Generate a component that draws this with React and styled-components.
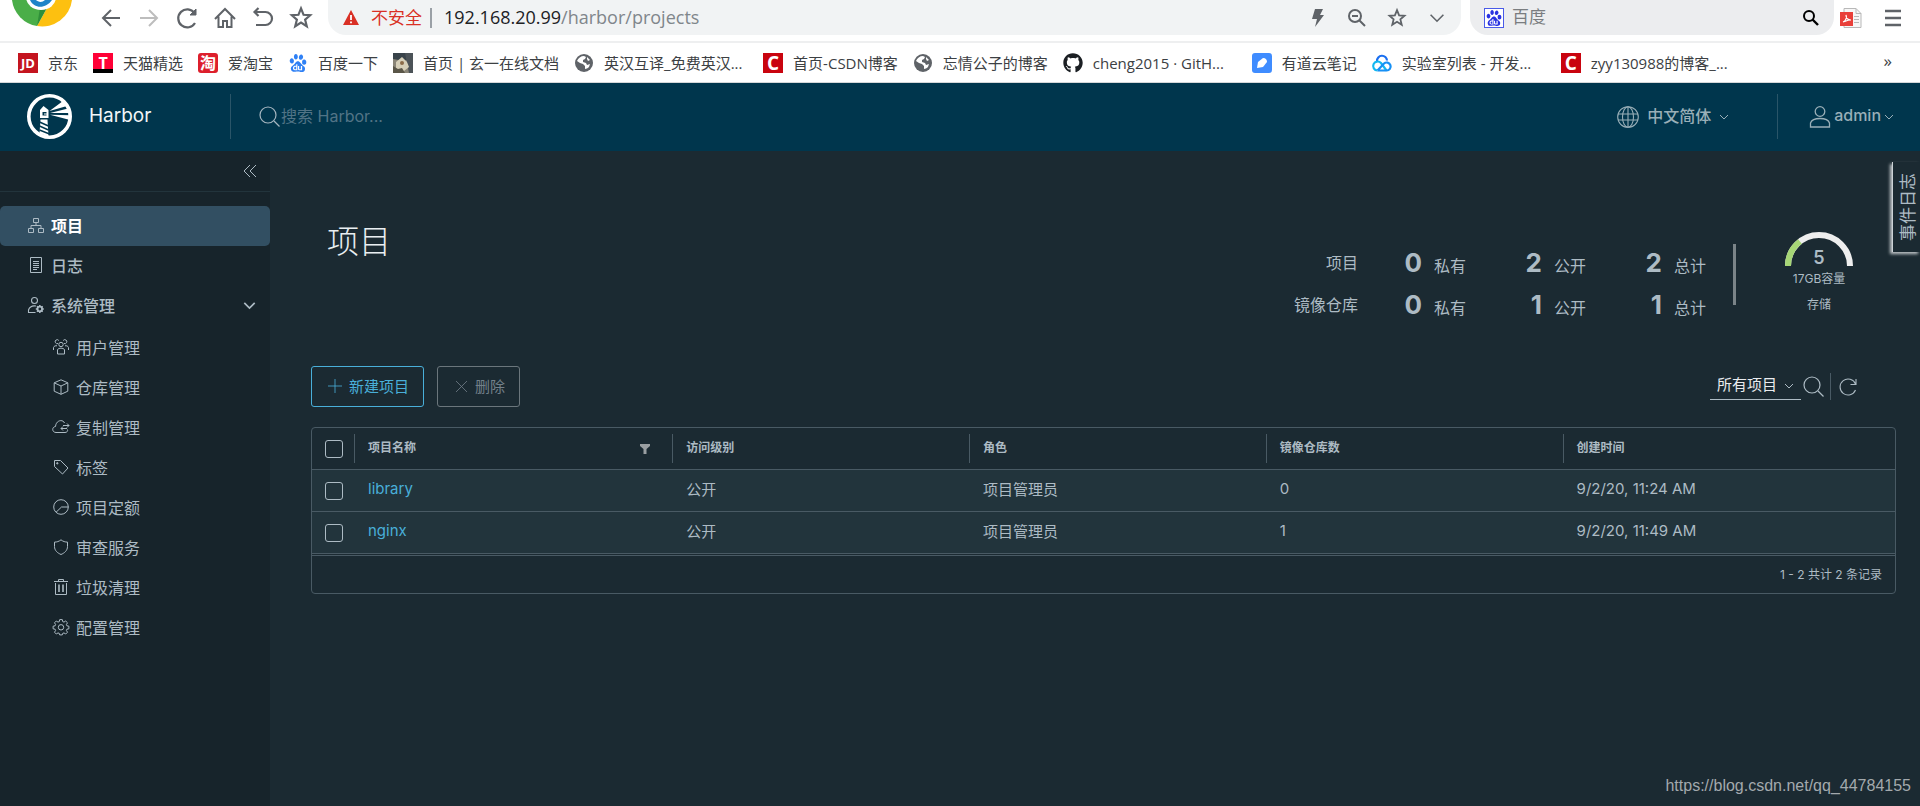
import { useState } from 'react';
import styled, { createGlobalStyle } from 'styled-components';
import { SiBaidu } from 'react-icons/si';
import { FaGithub } from 'react-icons/fa';

const GlobalStyle = createGlobalStyle`
  * {
    box-sizing: border-box;
  }

  body {
    margin: 0;
    background-color: #1b2a32;
    color: #adbbc4;
    font-family: Inter, 'Noto Sans CJK SC', sans-serif;
    font-size: 15px;
  }

  button,
  input,
  select {
    font: inherit;
    color: inherit;
  }

  svg {
    display: block;
    flex-shrink: 0;
    overflow: visible;
  }
`;

const Page = styled.div`
  min-height: 100vh;
  display: flex;
  flex-direction: column;
`;

/* browser bars */

const Browser = styled.div`
  background-color: white;
  color: #3c4043;
  font-family: 'Open Sans', 'Noto Sans CJK SC', sans-serif;
`;

const BrowserBar = styled.div`
  height: 41px;
  display: flex;
  align-items: flex-start;
  overflow: hidden;
`;

const BrowserLogo = styled.div`
  width: 60px;
  height: 30px;
  margin: 0 20px 0 12px;
`;

const BrowserButton = styled.button`
  width: ${(props) => props.$width || '38px'};
  height: 36px;
  padding: 0;
  border: none;
  background: none;
  color: ${(props) => (props.$dim ? '#bdbdbd' : '#5f6368')};
  display: flex;
  align-items: center;
  justify-content: center;
`;

const AddressBar = styled.div`
  flex: 1;
  height: 35px;
  margin-left: 8px;
  padding: 0 4px 0 15px;
  border-radius: 0 0 18px 18px;
  background-color: #f1f3f4;
  display: flex;
  align-items: center;
`;

const Unsafe = styled.span`
  margin-left: 12px;
  padding-right: 8px;
  border-right: 2px solid #9aa0a6;
  font-size: 17px;
  line-height: 20px;
  color: #d93025;
`;

const Url = styled.div`
  flex: 1;
  margin-left: 12px;
  padding-bottom: 2px;
  font-size: 18px;
  color: #80868b;

  b {
    font-weight: 400;
    color: #202124;
  }
`;

const SearchBox = styled.label`
  width: 364px;
  height: 35px;
  margin: 0 2px 0 9px;
  padding: 0 14px;
  border-radius: 0 0 18px 18px;
  background-color: #ecedef;
  display: flex;
  align-items: center;
  gap: 8px;
`;

const BaiduMark = styled.span`
  width: 20px;
  height: 20px;
  border: 1px solid #4a5be8;
  background-color: white;
  color: #2932e1;
  display: flex;
  align-items: center;
  justify-content: center;
`;

const PlainInput = styled.input`
  flex: 1;
  min-width: 0;
  padding: 0 0 2px;
  border: none;
  outline: none;
  background: none;
  font-size: ${(props) => props.$size};

  &::placeholder {
    color: ${(props) => props.$hint};
    opacity: 1;
  }
`;

const Bookmarks = styled.nav`
  height: 42px;
  padding: 0 28px 0 18px;
  border-top: 2px solid #eeeff0;
  border-bottom: 1px solid #d5d7d9;
  display: flex;
  align-items: center;
  gap: 15px;
`;

const Bookmark = styled.a`
  display: flex;
  align-items: center;
  gap: 10px;
  font-size: 15px;
  color: #3c4043;
  text-decoration: none;
  white-space: nowrap;

  span:last-child {
    min-width: ${(props) => (props.$long ? '144px' : 'auto')};
  }
`;

const Favicon = styled.span`
  width: 20px;
  height: 20px;
  border-radius: ${(props) => props.$radius || 0};
  background: ${(props) => props.$bg || 'none'};
  color: ${(props) => props.$color || 'white'};
  font-size: ${(props) => props.$size || '14px'};
  font-weight: 700;
  line-height: 20px;
  display: flex;
  align-items: center;
  justify-content: center;
`;

const More = styled.button`
  margin-left: auto;
  padding: 0 0 4px;
  border: none;
  background: none;
  font-size: 17px;
`;

/* harbor */

const Header = styled.header`
  height: 68px;
  padding-bottom: 1px;
  background-color: #00364d;
  display: flex;
  align-items: center;
`;

const Brand = styled.a`
  width: 231px;
  height: 45px;
  padding-left: 27px;
  border-right: 1px solid #2a5568;
  display: flex;
  align-items: center;
  gap: 17px;
  font-size: 19px;
  color: #f2f6f8;
  text-decoration: none;

  span {
    padding-bottom: 2px;
  }
`;

const HeaderSearch = styled.label`
  flex: 1;
  padding-left: 28px;
  display: flex;
  align-items: center;
  color: #a5b6c0;
`;

const HeaderButton = styled.button`
  height: 45px;
  padding: ${(props) => props.$pad};
  border: none;
  border-left: ${(props) => (props.$divided ? '1px solid #2a5568' : 'none')};
  background: none;
  color: #99afb8;
  font-size: 16px;
  font-weight: 500;
  display: flex;
  align-items: center;
  gap: ${(props) => props.$gap};

  span {
    padding-bottom: 3px;
  }
`;

const Body = styled.div`
  flex: 1;
  display: flex;
  position: relative;
`;

const Sidebar = styled.nav`
  width: 270px;
  flex-shrink: 0;
  background-color: #17242b;
`;

const Collapse = styled.button`
  width: 100%;
  height: 41px;
  margin-bottom: 14px;
  padding: 0 12px;
  border: none;
  border-bottom: 1px solid #22343c;
  background: none;
  display: flex;
  align-items: center;
  justify-content: flex-end;
`;

const NavItem = styled.a`
  height: 40px;
  padding: 0 14px 2px 28px;
  border-radius: 5px;
  background-color: ${(props) => (props.$active ? '#324f62' : 'transparent')};
  color: ${(props) => (props.$active ? 'white' : '#adbbc4')};
  font-size: 16px;
  font-weight: ${(props) => (props.$active ? 700 : 500)};
  text-decoration: none;
  display: flex;
  align-items: center;
  gap: 7px;

  > svg:first-child {
    color: #adbbc4;
  }

  > svg:nth-of-type(2) {
    margin-left: auto;
  }
`;

const SubList = styled.div`
  padding-top: 2px;
`;

const SubItem = styled(NavItem)`
  padding-left: 53px;
  font-weight: 400;
`;

const Main = styled.main`
  flex: 1;
  min-width: 0;
  padding: 0 24px 24px 41px;
`;

const Summary = styled.section`
  height: 215px;
  padding: 70px 43px 0 16px;
  display: flex;
  justify-content: space-between;
`;

const Title = styled.h1`
  margin: 0;
  font-size: 32px;
  font-weight: 300;
  line-height: 42px;
  color: #e9eef1;
`;

const Stats = styled.div`
  display: flex;
  align-items: flex-start;
`;

const StatGrid = styled.dl`
  margin: 0;
  padding: 21px 27px 0 0;
  display: grid;
  grid-template-columns: auto 108px 120px 120px;
  grid-auto-rows: 42px;
`;

const StatLabel = styled.dt`
  text-align: right;
  font-size: 16px;
  line-height: 42px;
`;

const Stat = styled.dd`
  margin: 0;
  display: flex;
  align-items: baseline;
  justify-content: flex-end;
  gap: 12px;
  font-size: 16px;
  line-height: 42px;

  b {
    font-size: 26px;
    font-weight: 700;
  }
`;

const StatBar = styled.div`
  width: 3px;
  height: 61px;
  margin: 23px 49px 0 0;
  background-color: #7b8488;
`;

const Gauge = styled.div`
  margin-top: 11px;
  font-size: 12px;
  line-height: 26px;
  text-align: center;
`;

const Toolbar = styled.div`
  padding-right: 39px;
  display: flex;
  align-items: center;
  gap: 13px;
  height: 41px;
`;

const ActionButton = styled.button`
  height: 41px;
  padding: 0 14px 2px 15px;
  border: 1px solid ${(props) => (props.disabled ? '#6b767c' : '#49afd9')};
  border-radius: 3px;
  background: none;
  color: ${(props) => (props.disabled ? '#73808a' : '#49afd9')};
  font-size: 15px;
  display: flex;
  align-items: center;
  gap: 6px;

  svg {
    opacity: 0.8;
  }
`;

const Filters = styled.div`
  margin-left: auto;
  display: flex;
  align-items: center;
`;

const SelectWrap = styled.label`
  position: relative;

  svg {
    position: absolute;
    right: 7px;
    top: 8px;
    pointer-events: none;
  }
`;

const Select = styled.select`
  width: 91px;
  height: 27px;
  padding: 0 0 3px 7px;
  appearance: none;
  border: none;
  border-bottom: 1px solid #adbbc4;
  border-radius: 0;
  background: none;
  color: #e9ecef;
  font-size: 15px;
`;

const IconButton = styled.button`
  height: 27px;
  padding: ${(props) => (props.$divided ? '0 0 0 8px' : '0 5px 0 2px')};
  border: none;
  border-left: ${(props) => (props.$divided ? '1px solid #495a64' : 'none')};
  background: none;
  display: flex;
  align-items: center;
`;

const GridPanel = styled.div`
  margin-top: 20px;
  border: 1px solid #495a64;
  border-radius: 4px;
`;

const Table = styled.table`
  width: 100%;
  table-layout: fixed;
  border-collapse: separate;
  border-spacing: 0;
`;

const Col = styled.col`
  width: ${(props) => props.$width};
`;

const Th = styled.th`
  height: 42px;
  padding: 0;
  border-bottom: 1px solid #495a64;
  font-size: 12px;
  font-weight: 600;
  text-align: left;
`;

const ThInner = styled.div`
  height: 29px;
  padding: 0 22px 4px 13px;
  border-left: 1px solid #495a64;
  display: flex;
  align-items: center;
  justify-content: space-between;

  svg {
    margin-top: 4px;
  }
`;

const CheckCell = styled.td`
  height: 42px;
  padding: 0 0 0 13px;
  border-bottom: 1px solid #495a64;
`;

const Td = styled.td`
  height: 42px;
  padding: 0 0 4px 14px;
  border-bottom: 1px solid #495a64;

  a {
    color: #49afd9;
    text-decoration: none;
  }
`;

const Row = styled.tr`
  background-color: #22343c;
`;

const Checkbox = styled.input`
  display: block;
  width: 18px;
  height: 18px;
  margin: 0;
  appearance: none;
  border: 1px solid #adbbc4;
  border-radius: 3px;

  &:checked {
    background-color: #49afd9;
  }
`;

const GridFooter = styled.div`
  height: 38px;
  margin-top: 1px;
  padding: 0 13px 2px;
  border-top: 1px solid #495a64;
  display: flex;
  align-items: center;
  justify-content: flex-end;
  font-size: 12px;
`;

const EventTab = styled.button`
  position: absolute;
  top: 11px;
  right: 0;
  width: 28px;
  height: 90px;
  padding: 0;
  border: none;
  border-right: 1px solid #ccd2d6;
  background-color: #1b2a32;
  box-shadow: 2px -2px 3px #c0c5c8;
  writing-mode: vertical-rl;
  text-orientation: sideways;
  transform: rotate(180deg);
  font-size: 17px;
`;

const Watermark = styled.div`
  position: absolute;
  right: 9px;
  bottom: 9px;
  font-family: 'Liberation Sans', Arial, sans-serif;
  font-size: 16px;
  line-height: 22px;
  color: #a3a9ad;
`;

const Icon = ({ size = 16, box = 24, width = 2, children }) => (
  <svg
    width={size}
    height={size}
    viewBox={`0 0 ${box} ${box}`}
    fill="none"
    stroke="currentColor"
    strokeWidth={width}
    aria-hidden="true"
  >
    {children}
  </svg>
);

const Chevron = ({ size = 10, width = 1 }) => (
  <Icon size={size} box={10} width={width}>
    <path d="M1 3l4 4 4-4" />
  </Icon>
);

const SearchIcon = () => (
  <Icon size={22} box={22} width={1.2}>
    <circle cx="9" cy="9" r="8" />
    <path d="M15 15l5.500 5.500" />
  </Icon>
);

const StarIcon = ({ size }) => (
  <Icon size={size} box={24} width={2.4}>
    <path d="M12 1.500l2.800 7 7.200.5-5.500 4.800 1.800 7.200-6.300-4-6.300 4 1.800-7.200L2 9l7.200-.5z" />
  </Icon>
);

const ChromeLogo = () => (
  <svg width="60" height="30" viewBox="0 0 60 30" aria-hidden="true">
    <path d="M0 0a30 30 0 0 0 25 26L38 0z" fill="#4aae48" />
    <path d="M60 0a30 30 0 0 1-35 26L35 8 41 0z" fill="#fdc010" />
    <path d="M25 26L35 8 28 8z" fill="#2f8f3a" />
    <ellipse cx="29" cy="-3" rx="15" ry="13" fill="white" />
    <path d="M18 0c4 9 16 9 22 0l-7 0c-3 3-7 2-9 0z" fill="#1f84c8" />
  </svg>
);

const HarborLogo = () => (
  <svg width="45" height="45" viewBox="0 0 45 45" aria-hidden="true">
    <circle cx="22.5" cy="22.5" r="20.7" fill="none" stroke="white" strokeWidth="3.6" />
    <path d="M16.500 12l5 4v8h-8.500v-8z" fill="white" />
    <path d="M15.500 18h4v3.500h-4z" fill="#00364d" />
    <path d="M17 19.500h3v1h-3z" fill="white" />
    <path d="M13.500 25.500h7l1 17-9-3z" fill="white" />
    <path d="M12.500 28l9 4M12.500 32l9 4M12.500 36l10 4" stroke="#00364d" strokeWidth="1.400" />
    <path d="M22.500 17L36 7l4 5zM23 19l18-4.500 2 4.500zM23 20.800l20 .400-1 4.500z" fill="white" />
  </svg>
);

const GlobeFavicon = () => (
  <svg width="18" height="18" viewBox="0 0 18 18" aria-hidden="true">
    <circle cx="9" cy="9" r="9" fill="#5f6368" />
    <path d="M2 7c1-3 4-5 7-5l2 1-1 2-2 1v2l3 1 1 2 3-1-1 3c-1 1-3 2-4 2v-3l-2-2-3-1z" fill="white" />
    <path d="M12 3l3 3-2 1-1-2z" fill="white" />
  </svg>
);

const PhotoFavicon = () => (
  <svg width="20" height="20" viewBox="0 0 20 20" aria-hidden="true">
    <path d="M0 0h20v20H0z" fill="#8a8577" />
    <path d="M0 0h20v5l-9 3-11-2z" fill="#39434a" />
    <path d="M12 0h8v20h-4z" fill="#4c5358" />
    <path d="M3 9l6-5 5 5 2 5-5 4-8-2z" fill="#d6cfb8" />
    <path d="M0 13l5 3 4-1 3 5H0z" fill="#5a5648" />
    <circle cx="9" cy="10" r="2" fill="#8b6b48" />
  </svg>
);

const CloudFavicon = () => (
  <svg width="20" height="18" viewBox="0 0 20 18" fill="none" strokeWidth="2.200" aria-hidden="true">
    <path d="M5 7a5 5 0 0 1 10-.500" stroke="#1a6ff0" />
    <path d="M5.500 16.500a4.500 4.500 0 1 1 3.500-7.500l5.500 7.500" stroke="#12b8f0" />
    <path d="M5.500 16.500l6.500-7a4 4 0 1 1 2.500 7h-9" stroke="#1690f5" />
  </svg>
);

const navIcons = {
  projects: (
    <Icon box={16} width={1}>
      <path d="M5.500 1.500h5v4h-5zM.5 11.500h5v4h-5zM10.500 11.500h5v4h-5zM8 5.500v3M3 11.500v-3h10v3" />
    </Icon>
  ),
  logs: (
    <Icon box={16} width={1}>
      <path d="M2.500.5h11v15h-11zM5 4.500h6M5 6.500h6M5 8.500h6M5 10.500h6M5 12.500h4" />
    </Icon>
  ),
  admin: (
    <Icon box={16} width={1.1}>
      <circle cx="6.500" cy="3.500" r="3" />
      <path d="M7.500 15.500H.5v-2.500c1-3 4-4.500 7.500-4" />
      <circle cx="11.800" cy="12" r="2.300" strokeWidth="1.800" />
      <path
        d="M11.800 8v1.500M11.800 14.500V16M7.800 12h1.500M14.300 12h1.500M9 9.200l1 1M13.600 13.800l1 1M14.600 9.200l-1 1M10 13.800l-1 1"
        strokeWidth="1.500"
      />
    </Icon>
  ),
  users: (
    <Icon box={16} width={1}>
      <circle cx="8" cy="5.500" r="2.200" />
      <path d="M4.500 15v-4.500c1.500-1.800 5.500-1.800 7 0V15z" />
      <path d="M5 4.500A2 2 0 1 1 5.800 1.500M11 4.500a2 2 0 1 0-.8-3M.5 11V8.500c.5-1.500 2-2 3.500-1.700M15.500 11V8.500c-.5-1.500-2-2-3.500-1.700" />
    </Icon>
  ),
  registry: (
    <Icon box={16} width={1}>
      <path d="M8 .8l6.800 3v8.400L8 15.300l-6.800-3.100V3.800zM1.200 3.800L8 7l6.800-3.200M8 7v8.300" />
    </Icon>
  ),
  replication: (
    <Icon box={16} width={1}>
      <g transform="translate(-1 -1)">
        <path d="M15.500 11.500c.5 1.500-.5 3-2.500 3H4c-4 0-4.500-5.500-.5-6C4 2 11 1 12.500 5" />
        <path d="M11 7.500h6M15 5.500l2 2-2 2M15 10.500H9M11 8.500l-2 2 2 2" />
      </g>
    </Icon>
  ),
  tag: (
    <Icon box={16} width={1}>
      <path d="M1.500 1.500h6l7.500 7.500-5.500 6L1.500 7.500z" />
      <circle cx="4.300" cy="4.300" r=".7" fill="currentColor" />
    </Icon>
  ),
  quota: (
    <Icon box={16} width={1}>
      <circle cx="8" cy="8" r="7.300" />
      <path d="M3 13.300L8.500 8H15.300" />
    </Icon>
  ),
  shield: (
    <Icon box={16} width={1}>
      <path d="M8 .8c2 1.700 4.200 2.300 6.500 2.300v4.400c0 4-3 6.500-6.500 8-3.500-1.500-6.500-4-6.500-8V3.100C3.800 3.100 6 2.500 8 .8z" />
    </Icon>
  ),
  trash: (
    <Icon box={16} width={1}>
      <path d="M2.500 4v11.500h11V4M1 2.500h14M5.500 2.500v-2h5v2" />
      <path d="M6 5.500v7.500M10 5.500v7.500" strokeWidth="1.600" />
    </Icon>
  ),
  cog: (
    <Icon box={16} width={1}>
      <path d="M6.700.6h2.600l.4 2 1.300.5 1.700-1.100 1.800 1.800-1.100 1.700.5 1.300 2 .4v2.600l-2 .4-.5 1.300 1.100 1.700-1.800 1.800-1.700-1.100-1.300.5-.4 1.500H6.700l-.4-1.500-1.300-.5-1.700 1.100-1.800-1.800 1.100-1.700-.5-1.300-2-.4V7.200l2-.4.5-1.300-1.100-1.700L3.300 2 5 3.100l1.300-.5z" />
      <circle cx="8" cy="8.300" r="2.700" />
    </Icon>
  ),
};

const systemItems = [
  ['users', '用户管理'],
  ['registry', '仓库管理'],
  ['replication', '复制管理'],
  ['tag', '标签'],
  ['quota', '项目定额'],
  ['shield', '审查服务'],
  ['trash', '垃圾清理'],
  ['cog', '配置管理'],
];

const stats = [
  { label: '项目', values: [[0, '私有'], [2, '公开'], [2, '总计']] },
  { label: '镜像仓库', values: [[0, '私有'], [1, '公开'], [1, '总计']] },
];

const projects = [
  { name: 'library', access: '公开', role: '项目管理员', repos: 0, created: '9/2/20, 11:24 AM' },
  { name: 'nginx', access: '公开', role: '项目管理员', repos: 1, created: '9/2/20, 11:49 AM' },
];

const csdn = <Favicon $bg="#c9040f" $size="19px">C</Favicon>;

const bookmarks = [
  { title: '京东', icon: <Favicon $bg="#c4141f" $size="13px">JD</Favicon> },
  { title: '天猫精选', icon: <Favicon $bg="linear-gradient(#ff0036 82%, #000 82%)" $size="16px">T</Favicon> },
  { title: '爱淘宝', icon: <Favicon $bg="#dd1f2c" $radius="3px" $size="16px">淘</Favicon> },
  { title: '百度一下', icon: <Favicon $color="#2f80f5"><SiBaidu size={18} /></Favicon> },
  { title: '首页 | 玄一在线文档', icon: <Favicon><PhotoFavicon /></Favicon> },
  { title: '英汉互译_免费英汉...', icon: <Favicon><GlobeFavicon /></Favicon>, long: true },
  { title: '首页-CSDN博客', icon: csdn },
  { title: '忘情公子的博客', icon: <Favicon><GlobeFavicon /></Favicon> },
  { title: 'cheng2015 · GitH...', icon: <Favicon $color="#1b1f23"><FaGithub size={20} /></Favicon>, long: true },
  {
    title: '有道云笔记',
    icon: (
      <Favicon $bg="#3f8cff" $radius="3px">
        <Icon size={14} box={14} width={0}>
          <path d="M2 12l1-6 5-4c3 0 4 2 4 4l-4 5z" fill="white" />
        </Icon>
      </Favicon>
    ),
  },
  { title: '实验室列表 - 开发...', icon: <Favicon><CloudFavicon /></Favicon>, long: true },
  { title: 'zyy130988的博客_...', icon: csdn, long: true },
];

const BrowserChrome = () => (
  <Browser>
    <BrowserBar>
      <BrowserLogo>
        <ChromeLogo />
      </BrowserLogo>
      <BrowserButton aria-label="后退">
        <Icon size={20} box={20}>
          <path d="M19 10H2M10 2l-8 8 8 8" />
        </Icon>
      </BrowserButton>
      <BrowserButton aria-label="前进" $dim>
        <Icon size={20} box={20}>
          <path d="M1 10h17M10 2l8 8-8 8" />
        </Icon>
      </BrowserButton>
      <BrowserButton aria-label="刷新">
        <Icon size={22} box={22} width={2.2}>
          <path d="M18.500 6A9 9 0 1 0 19 16" />
          <path d="M20 2v6h-6z" fill="currentColor" strokeWidth="1" />
        </Icon>
      </BrowserButton>
      <BrowserButton aria-label="主页">
        <Icon size={22} box={22}>
          <path d="M1 12L11 2l10 10M4.500 9.500V20h4.500v-6h4v6h4.500V9.500" />
        </Icon>
      </BrowserButton>
      <BrowserButton aria-label="撤销">
        <Icon size={22} box={22} width={2.2}>
          <path d="M6.500 1L2.500 5l4 4M2.500 5h11a6.500 6.500 0 0 1 0 13H4" />
        </Icon>
      </BrowserButton>
      <BrowserButton aria-label="收藏">
        <StarIcon size={22} />
      </BrowserButton>
      <AddressBar>
        <svg width="16" height="15" viewBox="0 0 16 15" aria-hidden="true">
          <path d="M8 0l8 15H0z" fill="#d93025" />
          <path d="M8 5v5M8 11.500v1.800" stroke="white" strokeWidth="1.800" />
        </svg>
        <Unsafe>不安全</Unsafe>
        <Url>
          <b>192.168.20.99</b>/harbor/projects
        </Url>
        <BrowserButton aria-label="极速模式">
          <svg width="12" height="18" viewBox="0 0 12 18" fill="currentColor" aria-hidden="true">
            <path d="M3 0h8L8 6h4L3 18l2-8H0z" />
          </svg>
        </BrowserButton>
        <BrowserButton aria-label="缩小" $width="40px">
          <Icon size={18} box={18}>
            <circle cx="7" cy="7" r="6" />
            <path d="M4 7h6M11.500 11.500L17 17" />
          </Icon>
        </BrowserButton>
        <BrowserButton aria-label="收藏此页" $width="40px">
          <StarIcon size={18} />
        </BrowserButton>
        <BrowserButton aria-label="展开" $width="40px">
          <Chevron size={16} />
        </BrowserButton>
      </AddressBar>
      <SearchBox>
        <BaiduMark>
          <SiBaidu size={16} />
        </BaiduMark>
        <PlainInput $size="17px" $hint="#7a7d80" placeholder="百度" aria-label="百度" />
        <Icon size={18} box={18}>
          <g stroke="#000">
            <circle cx="7" cy="7" r="5" />
            <path d="M10.500 10.500L16 16" strokeWidth="2.400" />
          </g>
        </Icon>
      </SearchBox>
      <BrowserButton aria-label="PDF" $width="30px">
        <svg width="22" height="20" viewBox="0 0 22 20" fill="none" aria-hidden="true">
          <path d="M4 .5h12l5 5v14H4z" fill="#f7f7f7" stroke="#b8b8b8" />
          <path d="M16 .5v5h5M14 8.500h5M14 11.500h5M14 14.500h5" stroke="#b8b8b8" />
          <path d="M0 4h13v14H0z" fill="#e9403a" />
          <path d="M3 14c3-1 4-5 3-7 0 3 2 5 5 5-3 0-5 1-8 2z" stroke="white" strokeWidth="1.200" />
        </svg>
      </BrowserButton>
      <BrowserButton aria-label="菜单" $width="54px">
        <Icon size={16} box={16} width={2.4}>
          <path d="M0 1h16M0 8h16M0 15h16" />
        </Icon>
      </BrowserButton>
    </BrowserBar>
    <Bookmarks>
      {bookmarks.map(({ title, icon, long }) => (
        <Bookmark key={title} href="#" $long={long}>
          {icon}
          <span>{title}</span>
        </Bookmark>
      ))}
      <More>»</More>
    </Bookmarks>
  </Browser>
);

const App = () => {
  const [selected, setSelected] = useState([]);

  const toggle = (name) => {
    setSelected((prev) =>
      prev.includes(name) ? prev.filter((item) => item !== name) : [...prev, name]
    );
  };

  const toggleAll = (ev) => {
    setSelected(ev.target.checked ? projects.map((project) => project.name) : []);
  };

  return (
    <Page>
      <GlobalStyle />
      <BrowserChrome />
      <Header>
        <Brand href="#">
          <HarborLogo />
          <span>Harbor</span>
        </Brand>
        <HeaderSearch>
          <SearchIcon />
          <PlainInput $size="16px" $hint="#527486" placeholder="搜索 Harbor..." aria-label="搜索 Harbor" />
        </HeaderSearch>
        <HeaderButton $pad="0 48px 0 0" $gap="8px">
          <Icon size={22} box={22} width={1.1}>
            <circle cx="11" cy="11" r="10.300" />
            <ellipse cx="11" cy="11" rx="5.500" ry="10.300" />
            <path d="M11 .7v20.600M1 8h20M1 14h20" />
          </Icon>
          <span>中文简体</span>
          <Chevron />
        </HeaderButton>
        <HeaderButton $divided $pad="0 26px 0 31px" $gap="3px">
          <Icon size={22} box={22} width={1.3}>
            <circle cx="11" cy="5.500" r="4.800" />
            <path d="M1.500 21v-4c2-6 17-6 19 0v4z" />
          </Icon>
          <span>admin</span>
          <Chevron />
        </HeaderButton>
      </Header>
      <Body>
        <Sidebar>
          <Collapse aria-label="收起">
            <Icon box={16} width={1}>
              <path d="M8 2L2 8l6 6M14 2L8 8l6 6" />
            </Icon>
          </Collapse>
          <NavItem href="#" $active>
            {navIcons.projects}
            项目
          </NavItem>
          <NavItem href="#">
            {navIcons.logs}
            日志
          </NavItem>
          <NavItem href="#">
            {navIcons.admin}
            系统管理
            <Chevron size={13} width={1.3} />
          </NavItem>
          <SubList>
            {systemItems.map(([icon, label]) => (
              <SubItem key={icon} href="#">
                {navIcons[icon]}
                {label}
              </SubItem>
            ))}
          </SubList>
        </Sidebar>
        <Main>
          <Summary>
            <Title>项目</Title>
            <Stats>
              <StatGrid>
                {stats.map(({ label, values }) => [
                  <StatLabel key={label}>{label}</StatLabel>,
                  ...values.map(([count, kind]) => (
                    <Stat key={label + kind}>
                      <b>{count}</b>
                      {kind}
                    </Stat>
                  )),
                ])}
              </StatGrid>
              <StatBar />
              <Gauge>
                <svg width="68" height="34" viewBox="0 0 68 34" fill="none" strokeWidth="6">
                  <path d="M3 34a31 31 0 0 1 62 0" stroke="#eeeeee" />
                  <path d="M3 34a31 31 0 0 1 12-24.500" stroke="#a6d676" />
                  <text x="34" y="32" textAnchor="middle" fontSize="18" fontWeight="600" fill="#adbbc4">
                    5
                  </text>
                </svg>
                <div>17GB容量</div>
                <div>存储</div>
              </Gauge>
            </Stats>
          </Summary>
          <Toolbar>
            <ActionButton>
              <Icon box={16} width={1}>
                <path d="M8 1v14M1 8h14" />
              </Icon>
              新建项目
            </ActionButton>
            <ActionButton disabled>
              <Icon box={16} width={1}>
                <path d="M3 3l11 11M14 3L3 14" />
              </Icon>
              删除
            </ActionButton>
            <Filters>
              <SelectWrap>
                <Select aria-label="项目范围">
                  <option>所有项目</option>
                </Select>
                <Chevron />
              </SelectWrap>
              <IconButton aria-label="搜索">
                <SearchIcon />
              </IconButton>
              <IconButton aria-label="刷新列表" $divided>
                <Icon size={18} box={18} width={1.1}>
                  <path d="M16.500 6A8 8 0 1 0 16.500 12M17 1v5.500h-5.500" />
                </Icon>
              </IconButton>
            </Filters>
          </Toolbar>
          <GridPanel>
            <Table>
              <colgroup>
                <Col $width="42px" />
                <Col $width="20.1%" />
                <Col $width="18.75%" />
                <Col $width="18.75%" />
                <Col $width="18.75%" />
                <Col />
              </colgroup>
              <thead>
                <tr>
                  <CheckCell as="th">
                    <Checkbox
                      type="checkbox"
                      aria-label="全选"
                      checked={selected.length === projects.length}
                      onChange={toggleAll}
                    />
                  </CheckCell>
                  <Th>
                    <ThInner>
                      项目名称
                      <svg width="10" height="10" viewBox="0 0 10 10" fill="#9a9fa2" aria-hidden="true">
                        <path d="M0 0h10v2L6.500 5v5h-3V5L0 2z" />
                      </svg>
                    </ThInner>
                  </Th>
                  {['访问级别', '角色', '镜像仓库数', '创建时间'].map((head) => (
                    <Th key={head}>
                      <ThInner>{head}</ThInner>
                    </Th>
                  ))}
                </tr>
              </thead>
              <tbody>
                {projects.map(({ name, access, role, repos, created }) => (
                  <Row key={name}>
                    <CheckCell>
                      <Checkbox
                        type="checkbox"
                        aria-label={name}
                        checked={selected.includes(name)}
                        onChange={() => toggle(name)}
                      />
                    </CheckCell>
                    <Td>
                      <a href="#">{name}</a>
                    </Td>
                    <Td>{access}</Td>
                    <Td>{role}</Td>
                    <Td>{repos}</Td>
                    <Td>{created}</Td>
                  </Row>
                ))}
              </tbody>
            </Table>
            <GridFooter>1 - 2 共计 2 条记录</GridFooter>
          </GridPanel>
        </Main>
        <EventTab>事件日志</EventTab>
        <Watermark>https://blog.csdn.net/qq_44784155</Watermark>
      </Body>
    </Page>
  );
};

export default App;
